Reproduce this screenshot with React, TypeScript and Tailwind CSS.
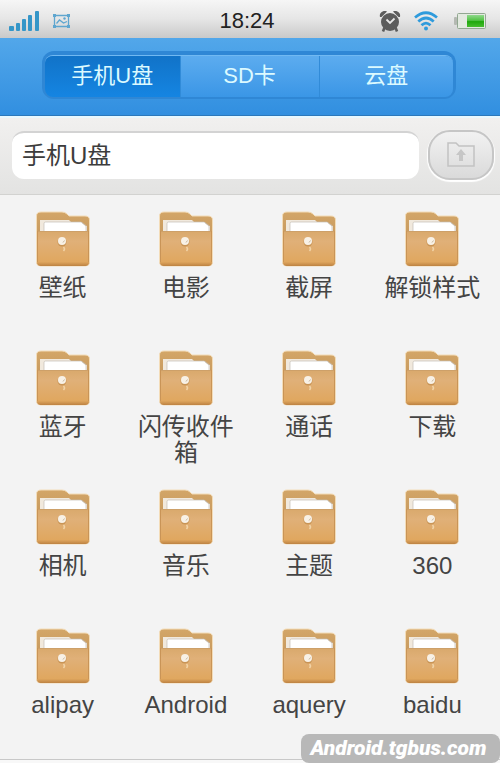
import React, { useState } from "react";

const tabs = ["手机U盘", "SD卡", "云盘"];

const folders = [
  "壁纸",
  "电影",
  "截屏",
  "解锁样式",
  "蓝牙",
  "闪传收件箱",
  "通话",
  "下载",
  "相机",
  "音乐",
  "主题",
  "360",
  "alipay",
  "Android",
  "aquery",
  "baidu",
];

const SignalIcon = () => (
  <svg className="h-5 w-8" viewBox="0 0 32 20" fill="#3596c8">
    <rect x="1" y="15" width="5" height="5" rx="1" />
    <rect x="8" y="12" width="4" height="8" rx="1" />
    <rect x="14" y="8" width="4" height="12" rx="1" />
    <rect x="20" y="4" width="4" height="16" rx="1" />
    <rect x="27" y="0" width="4" height="20" rx="1" />
  </svg>
);

const ScreenshotIcon = () => (
  <svg className="h-4 w-5" viewBox="0 0 20 16" fill="none" stroke="#5fa6cf" strokeWidth="1.3">
    <path d="M2.500 2.500h14v11h-14z" />
    <path d="M4.500 10.500l3-3.500 4 3 3.500-1.500" />
    <g fill="#5fa6cf" stroke="none">
      <circle cx="12.500" cy="5.500" r="1.200" />
      <rect x="1" y="1" width="3" height="3" />
      <rect x="15" y="1" width="3" height="3" />
      <rect x="1" y="12" width="3" height="3" />
      <rect x="15" y="12" width="3" height="3" />
    </g>
  </svg>
);

const AlarmIcon = () => (
  <svg className="h-6 w-6" viewBox="0 0 24 24" fill="#5c5c5c">
    <path d="M2 8C1 4 5 1 9 2.500L3.500 8zM22 8C23 4 19 1 15 2.500L20.500 8z" />
    <circle cx="12" cy="13" r="9" />
    <path d="M6.500 18.500l-1.500 4M17.500 18.500l1.500 4" stroke="#5c5c5c" strokeWidth="2.600" />
    <path d="M8.500 10.500l3.500 3.500 4.500-4.500" fill="none" stroke="#e6e6e6" strokeWidth="1.800" />
  </svg>
);

const WifiIcon = () => (
  <svg className="h-5 w-6" viewBox="0 0 24 20" fill="none" stroke="#2f9bdc" strokeWidth="2.700">
    <path d="M1 6.500Q12-3 23 6.500" />
    <path d="M4.300 10.500Q12 3.500 19.700 10.500" />
    <path d="M7.500 14.300Q12 10 16.500 14.300" />
    <circle cx="12" cy="17.500" r="2" fill="#2f9bdc" stroke="none" />
  </svg>
);

const BatteryIcon = () => (
  <svg className="h-5 w-8" viewBox="0 0 32 20">
    <defs>
      <linearGradient id="charge" x1="0" y1="0" x2="0" y2="1">
        <stop offset="0" stopColor="#8fd88c" />
        <stop offset="0.450" stopColor="#52c244" />
        <stop offset="0.550" stopColor="#1fa80c" />
        <stop offset="1" stopColor="#46bd2e" />
      </linearGradient>
    </defs>
    <rect x="0" y="6" width="3" height="8" rx="1" fill="#b4b8b2" />
    <rect x="3.500" y="2.500" width="28" height="15" rx="1" fill="#e3e9e0" stroke="#92a891" />
    <rect x="13" y="4" width="17" height="12" fill="url(#charge)" />
  </svg>
);

const UpFolderIcon = () => (
  <svg className="h-7 w-8" viewBox="0 0 32 28" fill="none" stroke="#c2c2c2" strokeWidth="1.500">
    <path d="M3 25V2h8l3 3h15v20z" />
    <path d="M16 8l5 6h-3v6h-4v-6h-3z" fill="#c6c6c6" stroke="none" />
  </svg>
);

const FolderIcon = () => (
  <svg className="h-14 w-14" viewBox="0 0 56 56">
    <defs>
      <linearGradient id="folderBack" x1="0" y1="0" x2="0" y2="1">
        <stop offset="0" stopColor="#d3a668" />
        <stop offset="1" stopColor="#b98a52" />
      </linearGradient>
      <linearGradient id="folderFront" x1="0" y1="0" x2="0" y2="1">
        <stop offset="0" stopColor="#d9a96c" />
        <stop offset="0.300" stopColor="#e0b078" />
        <stop offset="0.880" stopColor="#e0a75f" />
        <stop offset="1" stopColor="#bd8242" />
      </linearGradient>
    </defs>
    <path
      d="M1.500 5Q1.500 1 6 1h21q3 0 5 2l2 2h16q4.500 0 4.500 4v42q0 4-4 4H5.500q-4 0-4-4z"
      fill="url(#folderBack)"
      stroke="#f3dcb8"
      strokeWidth="1"
    />
    <path d="M5 9h29l2 2h11l5 4v6H5z" fill="#f1e9dd" />
    <path d="M47 11l5 4h-5z" fill="#bd935c" />
    <path d="M9 21V12.500q0-1.500 1.500-1.500H46l5 4v6z" fill="#fff" stroke="#c3bdb5" strokeWidth="0.700" />
    <path d="M2 20h52v31q0 4-4 4H6q-4 0-4-4z" fill="url(#folderFront)" />
    <path d="M2 20.500h52" stroke="#cda069" />
    <path d="M2.500 20v31M53.500 20v31" stroke="#c99457" />
    <circle cx="27" cy="31" r="4.500" fill="#c99556" />
    <circle cx="27" cy="30" r="4" fill="#f8f1e6" />
    <path d="M28 31.500l1.500-2" stroke="#c7b79f" />
    <path d="M28.500 36q2 2 0 4" fill="none" stroke="#f1d3a6" strokeWidth="1.500" />
  </svg>
);

const App: React.FC = () => {
  const [activeTab, setActiveTab] = useState(0);

  return (
    <div className="relative flex min-h-screen flex-col bg-[#f3f3f3] font-['Liberation_Sans','Noto_Sans_CJK_SC',sans-serif] text-[#444]">
      {/* Status bar */}
      <div className="grid h-[38px] grid-cols-[1fr_auto_1fr] items-center bg-gradient-to-b from-[#f6f6f6] via-[#e6e6e6] to-[#c9c9c9] pt-1 pr-3.5 pl-2">
        <div className="flex items-center gap-3">
          <SignalIcon />
          <ScreenshotIcon />
        </div>
        <span className="text-[22px] leading-6 text-[#222]">18:24</span>
        <div className="flex items-center justify-end">
          <AlarmIcon />
          <span className="mr-4 ml-3">
            <WifiIcon />
          </span>
          <BatteryIcon />
        </div>
      </div>

      {/* Storage tabs */}
      <header className="border-b border-[#2b78bb] bg-gradient-to-b from-[#52a7ea] to-[#318fe0] pt-[13px] pr-11 pb-4 pl-[42px]">
        <div className="rounded-xl bg-[#2f87d5] px-[3px] pt-1 pb-0.5">
          <div className="grid h-[42px] grid-cols-[1fr_139px_1fr] overflow-hidden rounded-lg border-t border-[#71b9f2]">
            {tabs.map((tab, index) => (
              <button
                key={tab}
                onClick={() => setActiveTab(index)}
                className={`border-[#318bd8] pb-0.5 text-[22px] text-[#dcfaff] not-first:border-l ${
                  activeTab === index
                    ? "bg-gradient-to-b from-[#1173c8] to-[#1585e2]"
                    : "bg-gradient-to-b from-[#5cacef] to-[#3a96e6]"
                }`}
              >
                {tab}
              </button>
            ))}
          </div>
        </div>
      </header>

      {/* Path bar */}
      <div className="flex items-center gap-[9px] border-t-2 border-b border-t-[#e8f8ff] border-b-[#d2d2d0] bg-gradient-to-b from-[#f1f0ef] to-[#e3e3e2] pt-3 pr-1.5 pb-3.5 pl-3">
        <input
          type="text"
          aria-label="路径"
          defaultValue="手机U盘"
          className="h-12 min-w-0 flex-1 rounded-xl border-t-2 border-[#d3d3d3] bg-white px-2.5 pb-1.5 text-2xl text-[#3c3c3c] outline-none"
        />
        <button
          aria-label="上一级"
          className="flex h-[50px] w-[66px] items-center justify-center rounded-[22px] border-2 border-[#c6c6c6] bg-gradient-to-b from-[#f2f2f2] to-[#dadada] shadow-[0_1px_1px_1px_#fff]"
        >
          <UpFolderIcon />
        </button>
      </div>

      {/* Folders */}
      <main className="grid flex-1 grid-cols-4 grid-rows-[repeat(3,139px)_auto] pt-4 pr-1.5 pl-px">
        {folders.map((name) => (
          <button key={name} className="flex flex-col items-center gap-2 px-2">
            <FolderIcon />
            <span className="text-2xl leading-[26px]">{name}</span>
          </button>
        ))}
      </main>
      <div className="h-1 border-t border-[#c8c8c8] bg-[#f8f8f8]" />

      <div className="absolute right-0 bottom-0 flex h-[29px] w-[199px] items-center justify-center rounded-lg bg-[#b8b8b8] pr-1 font-[Roboto,'Liberation_Sans',sans-serif] text-[21px] font-black text-white italic">
        Android.tgbus.com
      </div>
    </div>
  );
};

export default App;
